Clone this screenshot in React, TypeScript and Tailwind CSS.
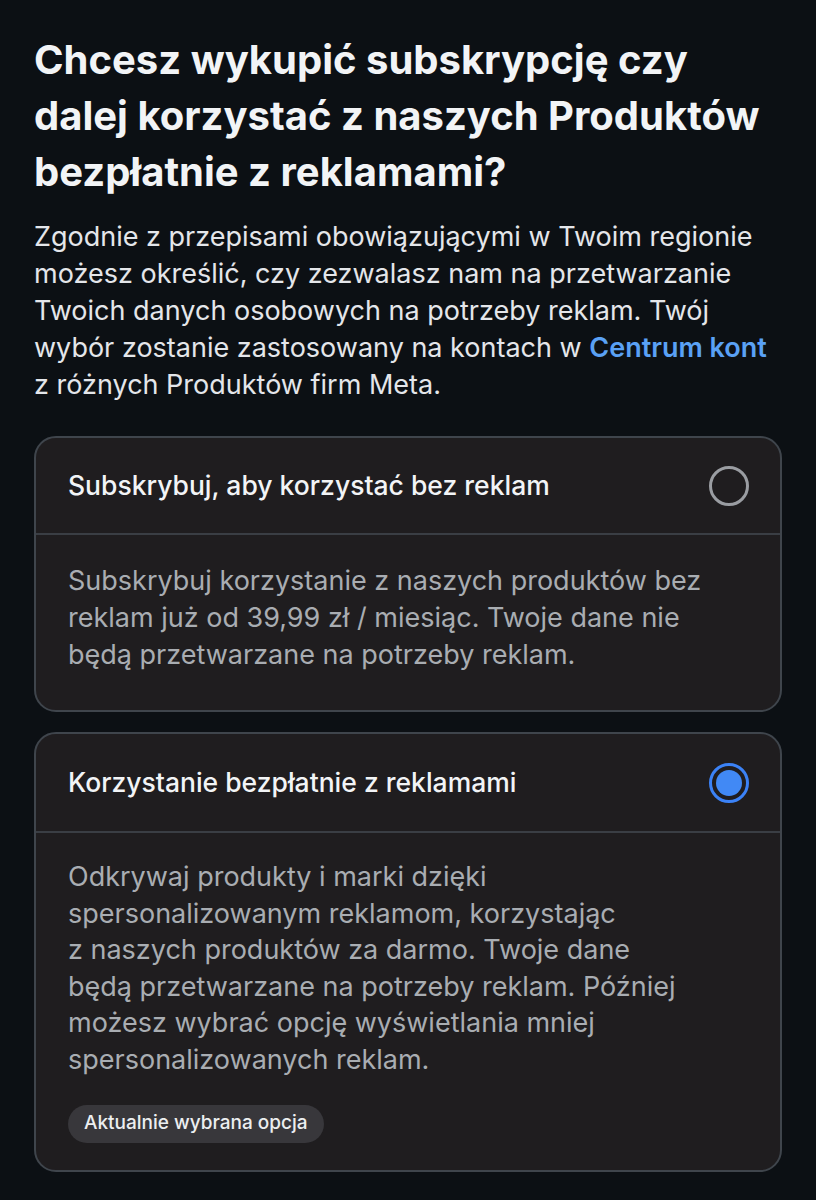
import React from "react";

function Radio({ selected }: { selected: boolean }) {
  if (selected) {
    return (
      <div className="w-[40px] h-[40px] rounded-full border-[3px] border-[#3b82f6] flex items-center justify-center shrink-0">
        <div className="w-[26px] h-[26px] rounded-full bg-[#4189f5]" />
      </div>
    );
  }
  return <div className="w-[40px] h-[40px] rounded-full border-[3px] border-[#9a9da2] shrink-0" />;
}

export default function App() {
  return (
    <div
      className="min-h-[1200px] w-[816px] bg-[#0c1014] px-[34px] pt-[32px] pb-[30px]"
      style={{ fontFamily: "Inter, 'Noto Sans', sans-serif" }}
    >
      <h1 className="text-[40px] leading-[56px] font-bold text-[#f2f4f6] whitespace-nowrap">
        Chcesz wykupić subskrypcję czy
        <br />
        dalej korzystać z naszych Produktów
        <br />
        bezpłatnie z reklamami?
      </h1>
      <p className="mt-[18px] text-[27px] leading-[37px] text-[#e4e6ea] whitespace-nowrap">
        Zgodnie z przepisami obowiązującymi w Twoim regionie
        <br />
        możesz określić, czy zezwalasz nam na przetwarzanie
        <br />
        Twoich danych osobowych na potrzeby reklam. Twój
        <br />
        wybór zostanie zastosowany na kontach w{" "}
        <span className="font-semibold text-[#5aa1f5]">Centrum kont</span>
        <br />z różnych Produktów firm Meta.
      </p>

      <div className="mt-[33px] rounded-[22px] border-2 border-[#3f454c] bg-[#1f1d1f]">
        <div className="h-[95px] flex items-center justify-between pl-[32px] pr-[31px]">
          <span className="text-[26.5px] font-medium text-[#f2f4f6] whitespace-nowrap">
            Subskrybuj, aby korzystać bez reklam
          </span>
          <Radio selected={false} />
        </div>
        <div className="border-t-2 border-[#3a3e44] pl-[32px] pr-[30px] pt-[27px] pb-[37px]">
          <p className="text-[27px] leading-[37px] text-[#a9adb2] whitespace-nowrap">
            Subskrybuj korzystanie z naszych produktów bez
            <br />
            reklam już od 39,99 zł / miesiąc. Twoje dane nie
            <br />
            będą przetwarzane na potrzeby reklam.
          </p>
        </div>
      </div>

      <div className="mt-[20px] rounded-[22px] border-2 border-[#3f454c] bg-[#1f1d1f]">
        <div className="h-[97px] flex items-center justify-between pl-[32px] pr-[31px]">
          <span className="text-[26.5px] font-medium text-[#f2f4f6] whitespace-nowrap">
            Korzystanie bezpłatnie z reklamami
          </span>
          <Radio selected={true} />
        </div>
        <div className="border-t-2 border-[#3a3e44] pl-[32px] pr-[30px] pt-[26px] pb-[27px]">
          <p className="text-[27px] leading-[36.6px] text-[#a9adb2] whitespace-nowrap">
            Odkrywaj produkty i marki dzięki
            <br />
            spersonalizowanym reklamom, korzystając
            <br />z naszych produktów za darmo. Twoje dane
            <br />
            będą przetwarzane na potrzeby reklam. Później
            <br />
            możesz wybrać opcję wyświetlania mniej
            <br />
            spersonalizowanych reklam.
          </p>
          <div className="mt-[26px] inline-flex h-[38px] items-center rounded-full bg-[#38373b] px-[16px]">
            <span className="text-[19px] font-medium text-[#eceef0]">Aktualnie wybrana opcja</span>
          </div>
        </div>
      </div>
    </div>
  );
}
